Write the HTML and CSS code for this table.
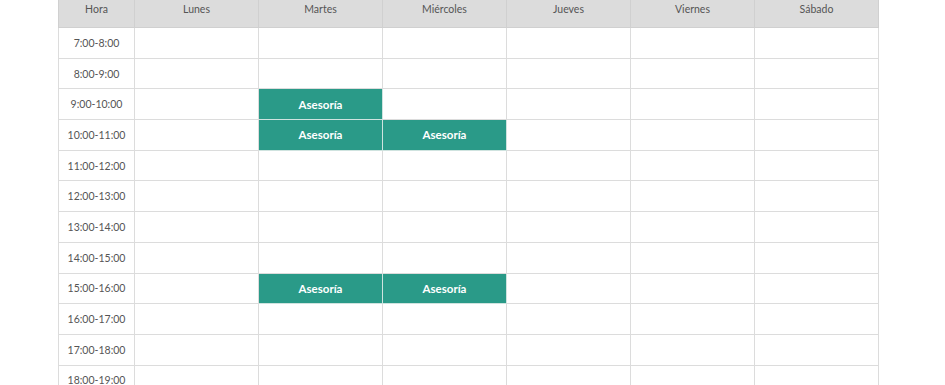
FILE: index.html
```html
<!DOCTYPE html>
<html lang="es">
<head>
<meta charset="utf-8">
<link rel="stylesheet" href="styles.css">
</head>
<body>
<div class="wrap">
<table class="schedule">
<colgroup><col class="c-hora"><col class="c-day"><col class="c-day"><col class="c-day"><col class="c-day"><col class="c-day"><col class="c-day"></colgroup>
<thead>
<tr><th>Hora</th><th>Lunes</th><th>Martes</th><th>Miércoles</th><th>Jueves</th><th>Viernes</th><th>Sábado</th></tr>
</thead>
<tbody>
<tr><td class="h">7:00-8:00</td><td></td><td></td><td></td><td></td><td></td><td></td></tr>
<tr><td class="h">8:00-9:00</td><td></td><td></td><td></td><td></td><td></td><td></td></tr>
<tr><td class="h">9:00-10:00</td><td></td><td class="busy">Asesoría</td><td></td><td></td><td></td><td></td></tr>
<tr><td class="h">10:00-11:00</td><td></td><td class="busy">Asesoría</td><td class="busy">Asesoría</td><td></td><td></td><td></td></tr>
<tr><td class="h">11:00-12:00</td><td></td><td></td><td></td><td></td><td></td><td></td></tr>
<tr><td class="h">12:00-13:00</td><td></td><td></td><td></td><td></td><td></td><td></td></tr>
<tr><td class="h">13:00-14:00</td><td></td><td></td><td></td><td></td><td></td><td></td></tr>
<tr><td class="h">14:00-15:00</td><td></td><td></td><td></td><td></td><td></td><td></td></tr>
<tr><td class="h">15:00-16:00</td><td></td><td class="busy">Asesoría</td><td class="busy">Asesoría</td><td></td><td></td><td></td></tr>
<tr><td class="h">16:00-17:00</td><td></td><td></td><td></td><td></td><td></td><td></td></tr>
<tr><td class="h">17:00-18:00</td><td></td><td></td><td></td><td></td><td></td><td></td></tr>
<tr><td class="h">18:00-19:00</td><td></td><td></td><td></td><td></td><td></td><td></td></tr>
</tbody>
</table>
</div>
</body>
</html>
```
FILE: styles.css
```css
html, body {
  margin: 0;
  padding: 0;
  background: #fff;
  overflow: hidden;
}
.wrap {
  padding-left: 58px;
  margin-top: -11px;
}
.schedule {
  border-collapse: collapse;
  table-layout: fixed;
  width: 820px;
  font-family: Lato, "Noto Sans", sans-serif;
  font-size: 10.5px;
  color: #555;
}
.c-hora { width: 76px; }
.c-day { width: 124px; }
.schedule th,
.schedule td {
  border: 1px solid #dcdcdc;
  text-align: center;
  vertical-align: middle;
  padding: 0;
}
.schedule th {
  background: #dcdcdc;
  font-weight: normal;
  height: 37px;
  color: #555;
  border-color: #d0d0d0;
}
.schedule tbody tr {
  height: 30.7px;
}
.schedule td.busy {
  background: #2a9a88;
  color: #fff;
  font-weight: bold;
  font-size: 11.5px;
  border-color: #cfe3df;
}
```
